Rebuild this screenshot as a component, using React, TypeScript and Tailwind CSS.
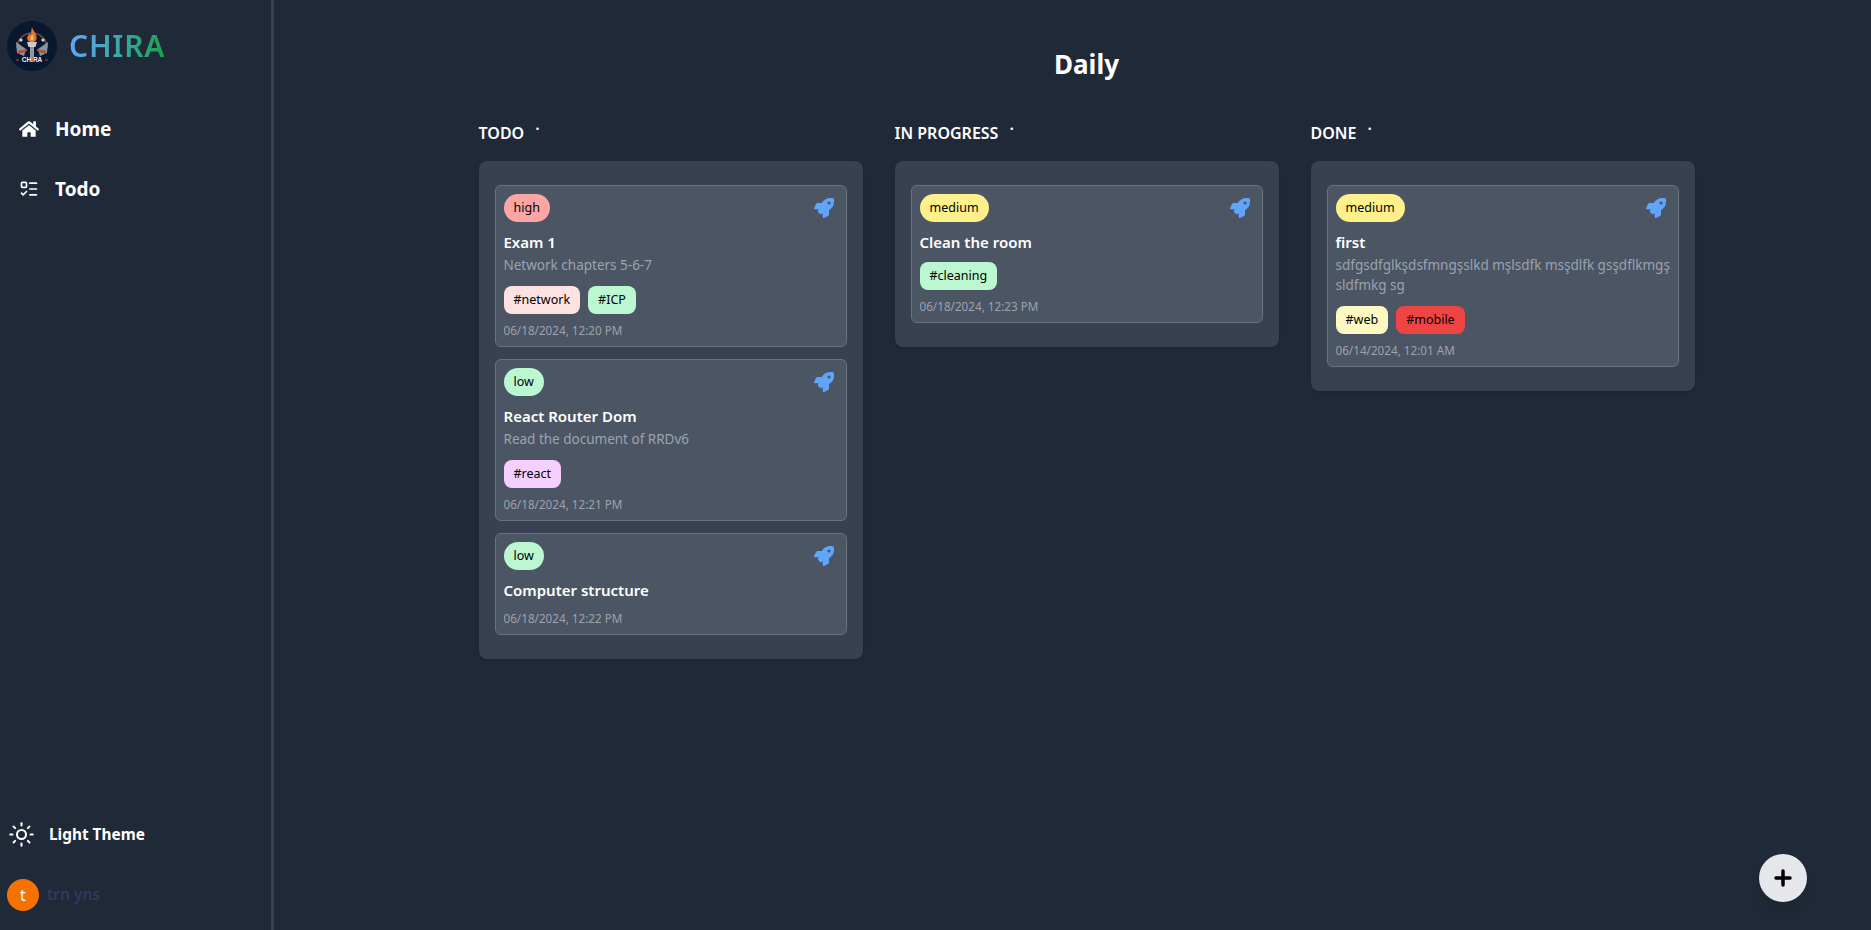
import { FaHome, FaRocket } from "react-icons/fa";
import { ListTodo, Sun, Plus } from "lucide-react";

type Task = {
  level: string;
  levelClass: string;
  title: string;
  desc?: string;
  tags: { name: string; cls: string }[];
  date: string;
};

const columns: { name: string; tasks: Task[] }[] = [
  {
    name: "TODO",
    tasks: [
      {
        level: "high",
        levelClass: "bg-[#fca5a5]",
        title: "Exam 1",
        desc: "Network chapters 5-6-7",
        tags: [
          { name: "#network", cls: "bg-[#fee2e2]" },
          { name: "#ICP", cls: "bg-[#bbf7d0]" },
        ],
        date: "06/18/2024, 12:20 PM",
      },
      {
        level: "low",
        levelClass: "bg-[#bbf7d0]",
        title: "React Router Dom",
        desc: "Read the document of RRDv6",
        tags: [{ name: "#react", cls: "bg-[#f5d0fe]" }],
        date: "06/18/2024, 12:21 PM",
      },
      {
        level: "low",
        levelClass: "bg-[#bbf7d0]",
        title: "Computer structure",
        tags: [],
        date: "06/18/2024, 12:22 PM",
      },
    ],
  },
  {
    name: "IN PROGRESS",
    tasks: [
      {
        level: "medium",
        levelClass: "bg-[#fef08a]",
        title: "Clean the room",
        tags: [{ name: "#cleaning", cls: "bg-[#bbf7d0]" }],
        date: "06/18/2024, 12:23 PM",
      },
    ],
  },
  {
    name: "DONE",
    tasks: [
      {
        level: "medium",
        levelClass: "bg-[#fef08a]",
        title: "first",
        desc: "sdfgsdfglkşdsfmngşslkd mşlsdfk msşdlfk gsşdflkmgş sldfmkg sg",
        tags: [
          { name: "#web", cls: "bg-[#fef9c3]" },
          { name: "#mobile", cls: "bg-[#ef4444]" },
        ],
        date: "06/14/2024, 12:01 AM",
      },
    ],
  },
];

function Logo() {
  return (
    <svg viewBox="0 0 50 50" className="w-[50px] h-[50px] shrink-0">
      <circle cx="25" cy="25" r="25" fill="#0a1730" />
      <path d="M10 27a15 15 0 0 1 30 0" fill="none" stroke="#7a4a38" strokeWidth="1.5" />
      <path d="M9 21l10 7-2 7-7-3z" fill="#8a93a3" />
      <path d="M41 21l-10 7 2 7 7-3z" fill="#8a93a3" />
      <path d="M11 30l9-2v2l-9 3z" fill="#b5502f" />
      <path d="M39 30l-9-2v2l9 3z" fill="#b5502f" />
      <circle cx="14" cy="19" r="1.6" fill="#d9d9d9" />
      <circle cx="36" cy="19" r="1.6" fill="#d9d9d9" />
      <path d="M25 6c1 4 5.500 7 4.500 12-.4 2-2.500 3.500-4.500 3.500s-4.200-1.500-4.700-3.500c-.6-3 1.700-4 2.200-6 .8 1 .8 2 1.300 2 .6-2 .2-5 1.200-8z" fill="#e8702a" />
      <path d="M25 13c1 2 2 3 1.500 5-.3 1-1 1.500-1.500 1.500s-1.600-.6-1.700-1.500c-.2-2 1.300-3 1.700-5z" fill="#f8c471" />
      <path d="M20 21h10l-1.500 5h-7z" fill="#c8ccd4" />
      <rect x="23" y="26" width="4" height="10" fill="#8f98a8" />
      <rect x="9" y="36" width="32" height="6" fill="#0a1730" />
      <path d="M9 39h3M38 39h3" stroke="#b5502f" strokeWidth="1" />
      <text x="25" y="41" textAnchor="middle" fontSize="6.500" fontWeight="700" fill="#f3f3f3" fontFamily="'Liberation Sans', sans-serif">
        CHIRA
      </text>
    </svg>
  );
}

function TaskCard({ task }: { task: Task }) {
  return (
    <div className="bg-[#4b5563] border border-[#6b7280] rounded-md px-2 pt-2 pb-2">
      <div className="flex items-start justify-between">
        <span className={`h-7 px-2.5 rounded-full text-black text-[12.500px] flex items-center ${task.levelClass}`}>
          {task.level}
        </span>
        <FaRocket className="text-[#60a5fa] text-[20px] mt-1 mr-[4px]" />
      </div>
      <h3 className="text-white text-[15px] font-semibold leading-5 mt-[10px]">{task.title}</h3>
      {task.desc && <p className="text-[#9ca3af] text-[13.500px] leading-5 mt-[3px] -mr-2">{task.desc}</p>}
      {task.tags.length > 0 && (
        <div className={`flex gap-2 ${task.desc ? "mt-[11px]" : "mt-[10px]"}`}>
          {task.tags.map((t) => (
            <span key={t.name} className={`h-7 px-2.5 rounded-lg text-black text-[12.500px] flex items-center ${t.cls}`}>
              {t.name}
            </span>
          ))}
        </div>
      )}
      <p className={`text-[#9ca3af] text-[11.700px] leading-4 ${task.tags.length > 0 ? "mt-2" : "mt-[10px]"}`}>{task.date}</p>
    </div>
  );
}

export default function App() {
  return (
    <div
      className="flex h-screen overflow-hidden bg-[#1f2937] text-white"
      style={{ fontFamily: "'Noto Sans', sans-serif" }}
    >
      <aside className="w-[274px] shrink-0 border-r-[3px] border-[#374151] flex flex-col pl-[7px] pt-[21px] pb-[19px]">
        <div className="flex items-center gap-3">
          <Logo />
          <span className="text-[30px] font-semibold tracking-wide bg-gradient-to-r from-[#60a5fa] to-[#16a34a] bg-clip-text text-transparent leading-none">
            CHIRA
          </span>
        </div>
        <nav className="mt-[43px] flex flex-col gap-[30px] pl-3">
          <a className="flex items-center gap-4 text-[19px] font-bold h-[30px]">
            <FaHome className="text-[20px]" />
            Home
          </a>
          <a className="flex items-center gap-4 text-[19px] font-bold h-[30px]">
            <ListTodo size={20} strokeWidth={2} />
            Todo
          </a>
        </nav>
        <div className="mt-auto flex items-center gap-[14px] pl-[1px]">
          <Sun size={27} strokeWidth={1.800} />
          <span className="text-[15.400px] font-bold">Light Theme</span>
        </div>
        <div className="mt-[31px] flex items-center gap-[8px]">
          <span className="w-8 h-8 rounded-full bg-[#f57200] flex items-center justify-center text-base">t</span>
          <span className="text-[15.500px] font-semibold text-[#2f3b5e]">trn yns</span>
        </div>
      </aside>
      <main className="flex-1 pl-[28px] pt-[46px]">
        <h1 className="text-center text-[26px] font-bold leading-9">Daily</h1>
        <div className="flex justify-center gap-8 mt-[41px]">
          {columns.map((col) => (
            <section key={col.name} className="w-96">
              <h2 className="text-base font-semibold leading-5 h-[26px] flex items-start">
                {col.name}
                <span className="ml-[11px] text-[16px] leading-[2px]">.</span>
              </h2>
              <div className="bg-[#374151] rounded-lg px-4 pt-6 pb-6 flex flex-col gap-3 shadow mt-[12px]">
                {col.tasks.map((t) => (
                  <TaskCard key={t.title} task={t} />
                ))}
              </div>
            </section>
          ))}
        </div>
      </main>
      <button className="fixed right-[64px] bottom-[28px] w-12 h-12 rounded-full bg-[#e5e7eb] text-black flex items-center justify-center shadow-lg">
        <Plus size={24} strokeWidth={3.500} />
      </button>
    </div>
  );
}
